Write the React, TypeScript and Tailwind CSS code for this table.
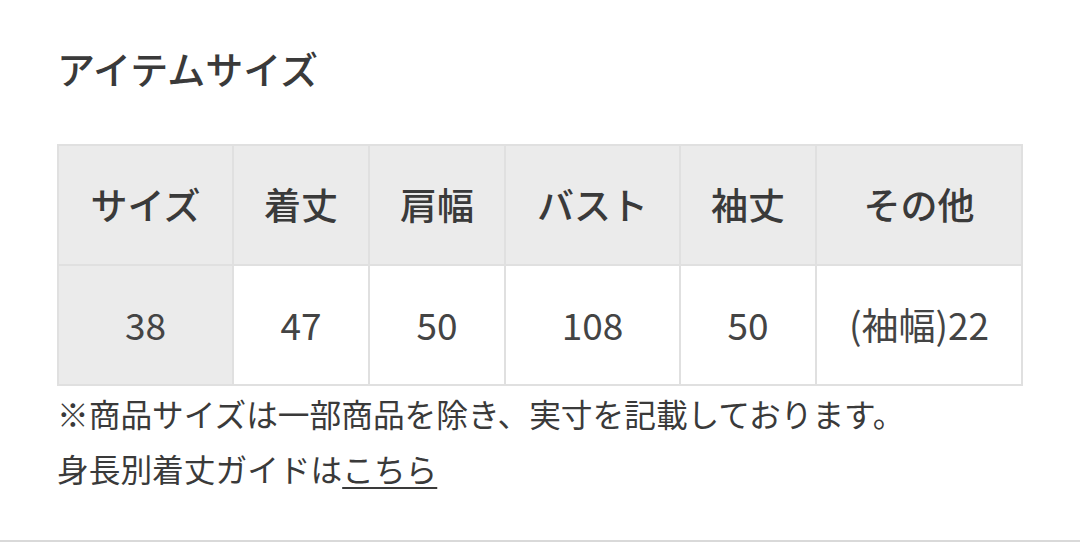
const headers = ["サイズ", "着丈", "肩幅", "バスト", "袖丈", "その他"];
const values = ["38", "47", "50", "108", "50", "(袖幅)22"];
const widths = ["w-[175px]", "w-[136px]", "w-[136px]", "w-[175px]", "w-[136px]", "w-[206px]"];

export default function App() {
  return (
    <div
      className="h-[542px] bg-white border-b-2 border-[#d9d9d9] px-[57px] pt-[40px] text-[#3a3a3a]"
      style={{ fontFamily: '"Noto Sans CJK JP", "Noto Sans", sans-serif' }}
    >
      <h2 className="text-[38px] leading-[56px] font-medium">アイテムサイズ</h2>
      <table className="mt-[48px] w-[964px] border-collapse table-fixed">
        <colgroup>
          {widths.map((w, i) => (
            <col key={i} className={w} />
          ))}
        </colgroup>
        <thead>
          <tr className="h-[120px]">
            {headers.map((h) => (
              <th
                key={h}
                className="border-2 border-[#e0e0e0] bg-[#ebebeb] text-[37px] font-medium text-center align-middle"
              >
                {h}
              </th>
            ))}
          </tr>
        </thead>
        <tbody>
          <tr className="h-[120px]">
            {values.map((v, i) => (
              <td
                key={i}
                className={
                  "border-2 border-[#e0e0e0] text-[37px] text-center align-middle text-[#444] " +
                  (i === 0 ? "bg-[#ebebeb]" : "bg-white")
                }
              >
                {v}
              </td>
            ))}
          </tr>
        </tbody>
      </table>
      <p className="text-[31.7px] leading-[55px]">※商品サイズは一部商品を除き、実寸を記載しております。</p>
      <p className="text-[31.7px] leading-[55px]">
        身長別着丈ガイドは
        <a href="#" className="underline decoration-2 underline-offset-[5px]">
          こちら
        </a>
      </p>
    </div>
  );
}
